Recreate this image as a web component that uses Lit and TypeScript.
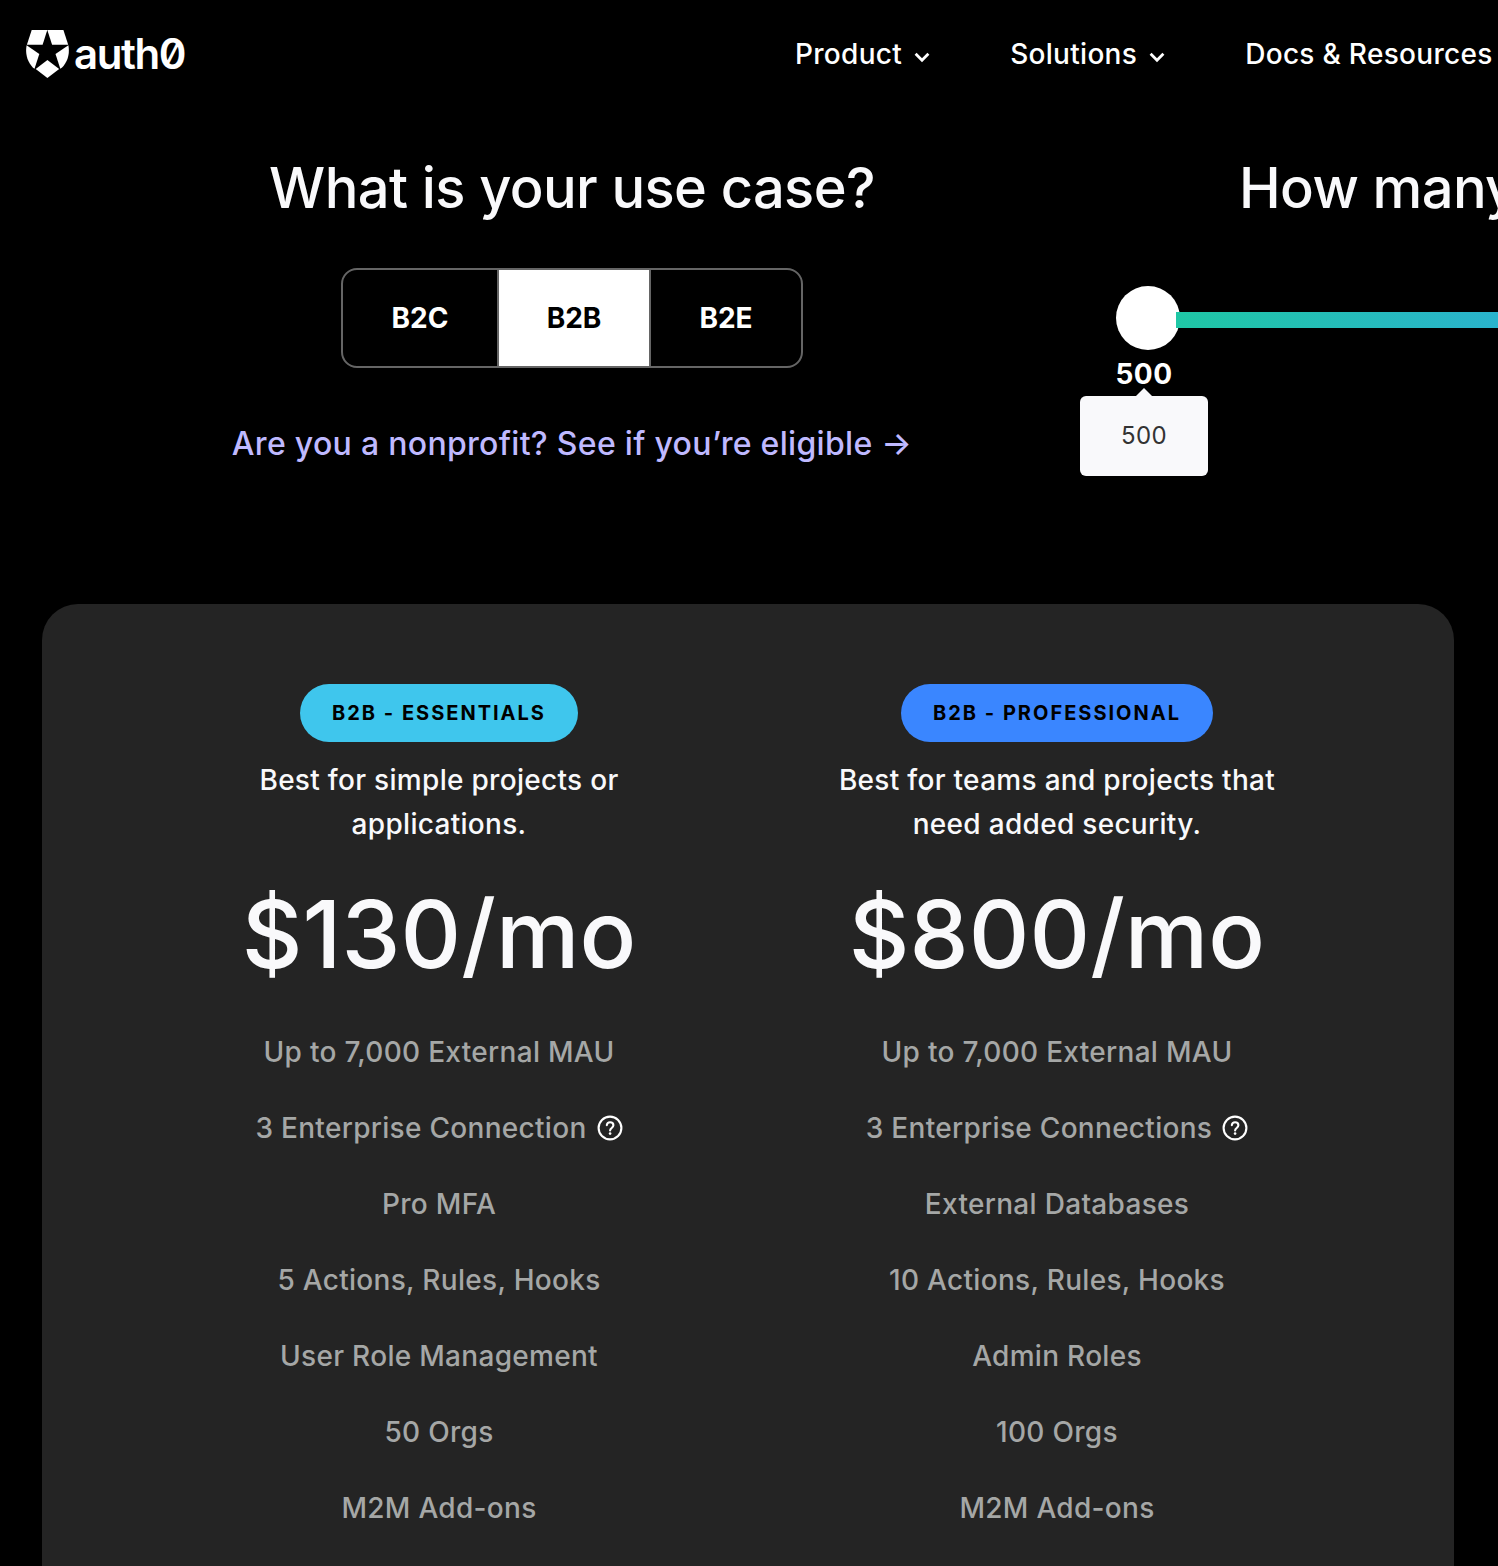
import { LitElement, html, css, svg, nothing } from "lit";
import { customElement, property } from "lit/decorators.js";

const chevron = html`<svg class="chevron" width="16" height="11" viewBox="0 0 16 11">
  <path d="M1.6 1.8 8 8.2l6.4-6.4" fill="none" stroke="currentColor" stroke-width="2.8" />
</svg>`;

const shield = svg`
  <path d="M5.7 0H21.3L16.6 14.8H.9z" />
  <path d="M21.3 0H37.4L42.2 14.8H26.1z" />
  <path d="M.6 15.3 13.3 24.1 8.5 38.8C2.8 34.4-1.3 25.7.6 15.3z" />
  <path d="M42.4 15.3 29.5 24.1 34.3 38.8C40.2 34.4 44.3 25.7 42.4 15.3z" />
  <path d="M21.4 30 33.2 38.9 21.4 48 9.7 38.9z" />`;

interface Plan {
  tone: string;
  badge: string;
  summary: string[];
  price: string;
  features: { text: string; help?: boolean }[];
}

const plans: Plan[] = [
  {
    tone: "cyan",
    badge: "B2B - ESSENTIALS",
    summary: ["Best for simple projects or", "applications."],
    price: "130",
    features: [
      { text: "Up to 7,000 External MAU" },
      { text: "3 Enterprise Connection", help: true },
      { text: "Pro MFA" },
      { text: "5 Actions, Rules, Hooks" },
      { text: "User Role Management" },
      { text: "50 Orgs" },
      { text: "M2M Add-ons" },
    ],
  },
  {
    tone: "blue",
    badge: "B2B - PROFESSIONAL",
    summary: ["Best for teams and projects that", "need added security."],
    price: "800",
    features: [
      { text: "Up to 7,000 External MAU" },
      { text: "3 Enterprise Connections", help: true },
      { text: "External Databases" },
      { text: "10 Actions, Rules, Hooks" },
      { text: "Admin Roles" },
      { text: "100 Orgs" },
      { text: "M2M Add-ons" },
    ],
  },
];

@customElement("site-header")
class SiteHeader extends LitElement {
  static styles = css`
    :host { display: block; }
    .bar { display: flex; align-items: center; height: 108px; padding-left: 26px; }
    .logo { display: flex; align-items: center; width: 769px; flex: none; }
    .mark { flex: none; fill: #fff; }
    .word { margin-left: 5px; font-size: 42px; font-weight: 600; letter-spacing: -1.4px; line-height: 48px; font-feature-settings: "zero"; }
    .nav { display: flex; gap: 80px; }
    .item { display: flex; align-items: center; gap: 12px; white-space: nowrap; font-size: 28px; font-weight: 500; letter-spacing: 0.3px; line-height: 44px; }
    .chevron { flex: none; margin-top: 6px; }
  `;
  render() {
    return html`<header class="bar">
      <div class="logo">
        <svg class="mark" width="43" height="48" viewBox="0 0 43 48">${shield}</svg>
        <span class="word">auth0</span>
      </div>
      <nav class="nav">
        ${["Product", "Solutions", "Docs & Resources"].map(
          (t) => html`<span class="item"><span>${t}</span>${chevron}</span>`
        )}
      </nav>
    </header>`;
  }
}

@customElement("use-case")
class UseCase extends LitElement {
  static styles = css`
    :host { display: flex; flex-direction: column; align-items: center; }
    .title { margin: 0; font-size: 56px; line-height: 72px; font-weight: 500; letter-spacing: -0.6px; color: #f9f9fb; white-space: nowrap; }
    .toggle { display: flex; box-sizing: border-box; width: 462px; height: 100px; margin-top: 44px; border: 2px solid #656565; border-radius: 16px; overflow: hidden; }
    .option { flex: 0 0 152px; box-sizing: border-box; border-right: 2px solid #656565; display: flex; align-items: center; justify-content: center; font-size: 28px; font-weight: 700; color: #fff; }
    .option:first-child { flex-basis: 156px; }
    .option:last-child { flex-basis: 150px; border-right: 0; }
    .active { background: #fff; color: #000; }
    .link { margin-top: 52px; font-size: 32px; line-height: 48px; font-weight: 500; letter-spacing: 0.3px; color: #bfb9ff; white-space: nowrap; }
  `;
  render() {
    return html`<h2 class="title">What is your use case?</h2>
      <div class="toggle">
        <span class="option">B2C</span>
        <span class="option active">B2B</span>
        <span class="option">B2E</span>
      </div>
      <a class="link">Are you a nonprofit? See if you’re eligible →</a>`;
  }
}

@customElement("user-slider")
class UserSlider extends LitElement {
  static styles = css`
    :host { display: block; overflow: hidden; }
    .title { margin: 0 0 0 159px; font-size: 56px; line-height: 72px; font-weight: 500; letter-spacing: -0.6px; color: #f9f9fb; white-space: nowrap; }
    .slider { display: flex; align-items: center; margin: 62px 0 0 36px; height: 64px; }
    .thumb { flex: none; width: 64px; height: 64px; border-radius: 50%; background: #fff; }
    .track { flex: 1; height: 16px; margin: 4px 0 0 -4px; background: linear-gradient(90deg, #1fc7a5, #2ab3cc); }
    .readout { display: flex; flex-direction: column; align-items: center; width: 128px; }
    .value { margin-top: 7px; font-size: 28px; line-height: 34px; font-weight: 700; letter-spacing: 0.4px; color: #fff; }
    .arrow { width: 16px; height: 8px; margin-top: -3px; background: #f9f9fb; clip-path: polygon(50% 0, 100% 100%, 0 100%); }
    .tip { box-sizing: border-box; width: 128px; height: 80px; border-radius: 6px; background: #f9f9fb; color: #333; font-size: 24px; line-height: 80px; letter-spacing: 0.4px; text-align: center; }
  `;
  render() {
    return html`<h2 class="title">How many</h2>
      <div class="slider"><span class="thumb"></span><span class="track"></span></div>
      <div class="readout">
        <span class="value">500</span>
        <span class="arrow"></span>
        <span class="tip">500</span>
      </div>`;
  }
}

@customElement("plan-column")
class PlanColumn extends LitElement {
  @property({ attribute: false }) plan!: Plan;
  static styles = css`
    :host { display: flex; flex-direction: column; align-items: center; min-width: 0; }
    .badge { box-sizing: border-box; height: 58px; padding: 0 32px; border-radius: 29px; font-size: 20px; font-weight: 700; line-height: 58px; letter-spacing: 2px; color: #000; white-space: nowrap; }
    .cyan { background: #3fc6ed; }
    .blue { background: #3a86ff; }
    .summary { margin: 16px 0 0; font-size: 28px; font-weight: 500; line-height: 44px; letter-spacing: 0.3px; text-align: center; color: #f9f9fb; }
    .line { display: block; white-space: nowrap; }
    .price { margin: 28px 0 0; display: flex; font-size: 94px; line-height: 120px; font-weight: 500; color: #f9f9fb; }
    .list { list-style: none; margin: 36px 0 0; padding: 0; }
    .feature { display: flex; align-items: center; justify-content: center; gap: 10px; height: 44px; margin-bottom: 32px; font-size: 28px; font-weight: 500; letter-spacing: 0.3px; color: #a5a7a6; white-space: nowrap; }
    .help { flex: none; color: #fff; }
  `;
  render() {
    const p = this.plan;
    return html`<span class="badge ${p.tone}">${p.badge}</span>
      <p class="summary">${p.summary.map((l) => html`<span class="line">${l}</span>`)}</p>
      <div class="price">$${p.price}/mo</div>
      <ul class="list">
        ${p.features.map(
          (f) => html`<li class="feature"><span>${f.text}</span>${f.help
            ? html`<svg class="help" width="26" height="26" viewBox="0 0 26 26" fill="none" stroke="currentColor" stroke-width="2.1">
                <circle cx="13" cy="13" r="11.4" />
                <path d="M9.8 10.2C10 8.3 11.4 7.3 13.1 7.3c1.9 0 3.3 1.2 3.3 3 0 2.6-3.3 2.7-3.3 5.1" stroke-linecap="round" />
                <circle cx="13.1" cy="18.6" r="1.3" fill="currentColor" stroke="none" />
              </svg>`
            : nothing}</li>`
        )}
      </ul>`;
  }
}

@customElement("app-root")
class AppRoot extends LitElement {
  static styles = css`
    :host { display: block; width: 1498px; height: 1566px; overflow: hidden; background: #000; color: #fff; font-family: Inter, "Liberation Sans", sans-serif; }
    .intro { display: grid; grid-template-columns: 1016px 418px; padding: 44px 0 0 64px; height: 452px; }
    .card { display: grid; grid-template-columns: 1fr 1fr; box-sizing: border-box; margin: 0 44px 0 42px; height: 1040px; padding: 80px 88px 0; border-radius: 36px; background: #242424; }
  `;
  render() {
    return html`<site-header></site-header>
      <main>
        <section class="intro"><use-case></use-case><user-slider></user-slider></section>
        <section class="card">${plans.map((p) => html`<plan-column .plan=${p}></plan-column>`)}</section>
      </main>`;
  }
}
